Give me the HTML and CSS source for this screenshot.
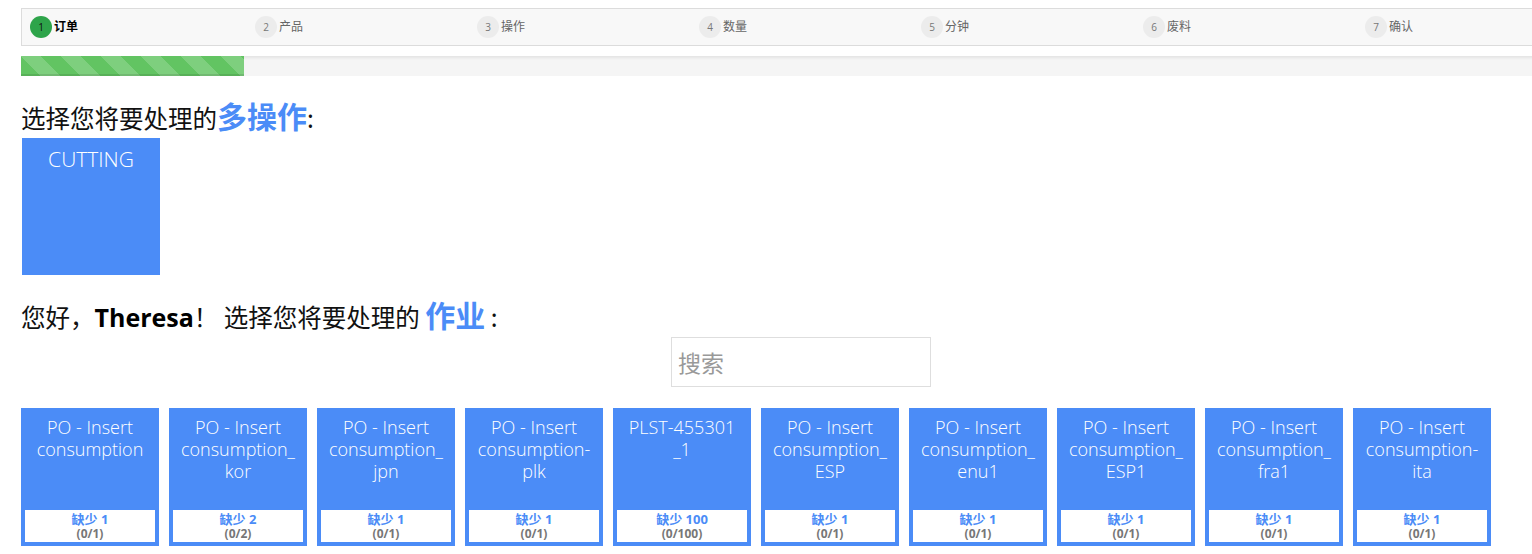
FILE: index.html
```html
<!DOCTYPE html>
<html>
<head>
<meta charset="utf-8">
<link rel="stylesheet" href="styles.css">
</head>
<body>
<div class="page">
  <div class="stepper">
    <div class="step active"><span class="num">1</span><span class="label">订单</span></div>
    <div class="step"><span class="num">2</span><span class="label">产品</span></div>
    <div class="step"><span class="num">3</span><span class="label">操作</span></div>
    <div class="step"><span class="num">4</span><span class="label">数量</span></div>
    <div class="step"><span class="num">5</span><span class="label">分钟</span></div>
    <div class="step"><span class="num">6</span><span class="label">废料</span></div>
    <div class="step"><span class="num">7</span><span class="label">确认</span></div>
  </div>
  <div class="progress"><div class="bar" style="width:223px"></div></div>

  <h2 class="heading h1">选择您将要处理的<b class="hl">多操作</b>:</h2>
  <div class="tile">CUTTING</div>

  <h2 class="heading h2">您好，<b class="name">Theresa</b>！ 选择您将要处理的 <b class="hl">作业</b> :</h2>

  <div class="search-row"><input class="search" type="text" placeholder="搜索"></div>

  <div class="cards">
    <div class="card"><div class="title">PO - Insert consumption</div><div class="status"><div class="miss">缺少 1</div><div class="count">(0/1)</div></div></div>
    <div class="card"><div class="title">PO - Insert consumption_ kor</div><div class="status"><div class="miss">缺少 2</div><div class="count">(0/2)</div></div></div>
    <div class="card"><div class="title">PO - Insert consumption_ jpn</div><div class="status"><div class="miss">缺少 1</div><div class="count">(0/1)</div></div></div>
    <div class="card"><div class="title">PO - Insert consumption- plk</div><div class="status"><div class="miss">缺少 1</div><div class="count">(0/1)</div></div></div>
    <div class="card"><div class="title">PLST-455301 _1</div><div class="status"><div class="miss">缺少 100</div><div class="count">(0/100)</div></div></div>
    <div class="card"><div class="title">PO - Insert consumption_ ESP</div><div class="status"><div class="miss">缺少 1</div><div class="count">(0/1)</div></div></div>
    <div class="card"><div class="title">PO - Insert consumption_ enu1</div><div class="status"><div class="miss">缺少 1</div><div class="count">(0/1)</div></div></div>
    <div class="card"><div class="title">PO - Insert consumption_ ESP1</div><div class="status"><div class="miss">缺少 1</div><div class="count">(0/1)</div></div></div>
    <div class="card"><div class="title">PO - Insert consumption_ fra1</div><div class="status"><div class="miss">缺少 1</div><div class="count">(0/1)</div></div></div>
    <div class="card"><div class="title">PO - Insert consumption- ita</div><div class="status"><div class="miss">缺少 1</div><div class="count">(0/1)</div></div></div>
  </div>
</div>
</body>
</html>
```

FILE: styles.css
```css
html, body {
  margin: 0;
  padding: 0;
  background: #fff;
  overflow: hidden;
}
body {
  font-family: "Open Sans", "Noto Sans CJK SC", sans-serif;
  color: #222;
}
.page {
  padding: 8px 0 0 21px;
  width: 1600px;
}
.stepper {
  display: flex;
  width: 1560px;
  height: 36px;
  border: 1px solid #dcdcdc;
  background: #f8f8f8;
}
.step {
  width: 222px;
  flex: none;
  display: flex;
  align-items: center;
  padding-left: 11px;
  box-sizing: border-box;
}
.step:first-child {
  padding-left: 8px;
}
.num {
  width: 22px;
  height: 22px;
  border-radius: 50%;
  background: #ececec;
  color: #777;
  font-size: 10px;
  display: flex;
  align-items: center;
  justify-content: center;
  margin-right: 2px;
}
.label {
  font-size: 12px;
  line-height: 16px;
  color: #666;
  font-family: "Noto Sans CJK SC", sans-serif;
  margin-top: -2px;
}
.step.active .num {
  background: #2ea44a;
  color: #111;
}
.step.active .label {
  color: #000;
  font-weight: 700;
}
.progress {
  margin-top: 10px;
  height: 20px;
  width: 1540px;
  background: #f5f5f5;
  box-shadow: inset 0 2px 3px rgba(0,0,0,0.07);
}
.bar {
  height: 20px;
  background-color: #62c462;
  background-image: linear-gradient(45deg, rgba(255,255,255,.18) 25%, transparent 25%, transparent 50%, rgba(255,255,255,.18) 50%, rgba(255,255,255,.18) 75%, transparent 75%, transparent);
  background-size: 40px 40px;
  box-shadow: inset 0 -2px 0 rgba(0,0,0,0.1);
}
.heading {
  margin: 0;
  font-weight: 400;
  font-size: 24.5px;
  color: #111;
  font-family: "Noto Sans CJK SC", sans-serif;
  line-height: 38px;
}
.h1 {
  margin-top: 20px;
  height: 42px;
}
.hl {
  color: #4b8cf7;
  font-weight: 700;
  font-size: 30px;
}
.name {
  font-family: "Open Sans", sans-serif;
  font-weight: 700;
  font-size: 25px;
  color: #000;
}
.tile {
  width: 138px;
  height: 137px;
  margin-left: 1px;
  background: #4b8cf7;
  color: #fff;
  font-size: 21px;
  font-weight: 300;
  text-align: center;
  padding-top: 7px;
  box-sizing: border-box;
}
.h2 {
  margin-top: 20px;
  height: 40px;
}
.search-row {
  padding-left: 650px;
  margin-top: 2px;
}
.search {
  width: 260px;
  height: 50px;
  box-sizing: border-box;
  border: 1px solid #dedede;
  font-size: 23px;
  padding: 0 6px;
  font-family: "Noto Sans CJK SC", sans-serif;
  outline: none;
  display: block;
}
.search::placeholder {
  color: #999;
}
.cards {
  display: flex;
  gap: 10px;
  margin-top: 21px;
}
.card {
  width: 138px;
  height: 138px;
  flex: none;
  background: #4b8cf7;
  display: flex;
  flex-direction: column;
  padding: 0 4px 4px;
  box-sizing: border-box;
}
.title {
  flex: 1;
  color: #fff;
  font-size: 18px;
  font-weight: 300;
  line-height: 22px;
  text-align: center;
  padding: 8px 4px 0;
  overflow-wrap: break-word;
}
.status {
  height: 32px;
  background: #fff;
  text-align: center;
  display: flex;
  flex-direction: column;
  justify-content: center;
}
.miss {
  color: #4b8cf7;
  font-weight: 700;
  font-size: 13px;
  line-height: 15px;
  font-family: "Open Sans", "Noto Sans CJK SC", sans-serif;
}
.count {
  color: #777;
  font-weight: 700;
  font-size: 12px;
  line-height: 13px;
}
```
